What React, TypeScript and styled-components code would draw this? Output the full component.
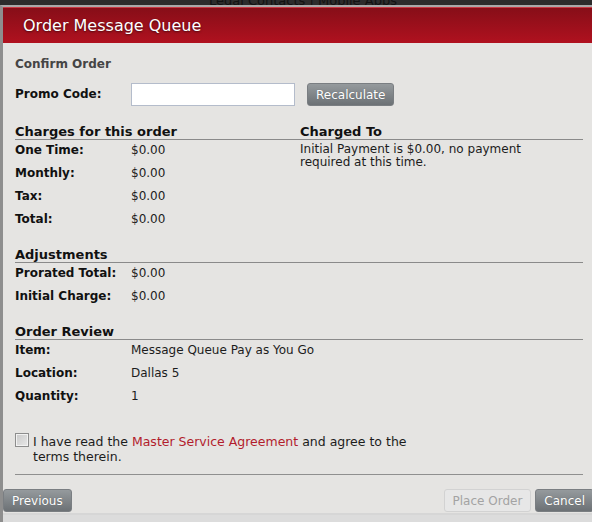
import React from "react";
import styled, { createGlobalStyle } from "styled-components";

const Global = createGlobalStyle`
  html, body { margin: 0; padding: 0; overflow: hidden; background: #2c2c2c; }
  body { font-family: "DejaVu Sans", Verdana, sans-serif; font-size: 12px; color: #111; }
`;

const Page = styled.div`
  width: 592px;
  height: 522px;
  overflow: hidden;
  display: flex;
  flex-direction: column;
`;

const TopStrip = styled.div`
  height: 5px;
  flex: none;
  overflow: hidden;
  background: #2c2c2c;
  padding-left: 209px;
`;

const TopLinks = styled.div`
  font-size: 13px;
  line-height: 13px;
  margin-top: -6px;
  color: #121212;
  white-space: nowrap;
`;

const Dialog = styled.div`
  box-sizing: border-box;
  width: 596px;
  flex: 1;
  display: flex;
  flex-direction: column;
  border-top: 2px solid #a9a9a9;
  border-left: 3px solid #8e8e8e;
  background: #e5e4e2;
`;

const Header = styled.div`
  height: 35px;
  flex: none;
  display: flex;
  align-items: center;
  padding-left: 20px;
  border-top: 1px solid #c83a44;
  background: linear-gradient(#870e18, #b0111f);
  color: #fff;
  font-size: 16px;
  text-shadow: 0 1px 2px rgba(0, 0, 0, 0.55);
`;

const Body = styled.div`
  padding: 13px 13px 0 12px;
  display: flex;
  flex-direction: column;
`;

const StepTitle = styled.div`
  font-weight: bold;
  font-size: 12px;
  line-height: 16px;
  color: #454545;
`;

const PromoRow = styled.div`
  display: flex;
  align-items: center;
  gap: 12px;
  margin-top: 11px;
  height: 23px;
`;

const Label = styled.div`
  width: 116px;
  flex: none;
  font-weight: bold;
`;

const PromoLabel = styled(Label)`
  width: 104px;
  margin-top: -2px;
`;

const TextInput = styled.input`
  box-sizing: border-box;
  width: 164px;
  height: 23px;
  border: 1px solid #b4bccb;
  background: #fff;
  margin: 0;
  padding: 0 4px;
  font: inherit;
`;

const Button = styled.button<{ $disabled?: boolean }>`
  box-sizing: border-box;
  height: 23px;
  margin: 0;
  padding: 0 8px;
  font-family: "DejaVu Sans", Verdana, sans-serif;
  font-size: 12px;
  border-radius: 3px;
  border: 1px solid ${(p) => (p.$disabled ? "#d2d2d2" : "#7a7e82")};
  background: ${(p) =>
    p.$disabled ? "#e7e7e7" : "linear-gradient(#959a9d, #6c7175)"};
  color: ${(p) => (p.$disabled ? "#a3a3a3" : "#fff")};
  text-shadow: ${(p) => (p.$disabled ? "none" : "0 0 1px rgba(0,0,0,0.3)")};
`;

const Columns = styled.div`
  display: flex;
  margin-top: 18px;
`;

const Column = styled.div<{ $w?: number }>`
  width: ${(p) => (p.$w ? `${p.$w}px` : "auto")};
  flex: ${(p) => (p.$w ? "none" : "1")};
  display: flex;
  flex-direction: column;
`;

const Section = styled.div<{ $gap?: number }>`
  display: flex;
  flex-direction: column;
  margin-top: ${(p) => p.$gap ?? 0}px;
`;

const SectionTitle = styled.div`
  font-size: 13px;
  font-weight: bold;
  line-height: 15px;
  border-bottom: 1px solid #8a8a8a;
  color: #111;
`;

const Row = styled.div`
  display: flex;
  height: 23px;
  line-height: 20px;
`;

const Value = styled.div`
  color: #1c1c1c;
`;

const Note = styled.div`
  padding-top: 3px;
  line-height: 13px;
  color: #1c1c1c;
`;

const Agreement = styled.div`
  display: flex;
  align-items: flex-start;
  margin-top: 24px;
  width: 410px;
  line-height: 15px;
  font-size: 12.5px;
  color: #1c1c1c;
`;

const CheckBox = styled.span`
  box-sizing: border-box;
  flex: none;
  width: 14px;
  height: 14px;
  margin-right: 4px;
  border: 1px solid #8d8d8d;
  background: linear-gradient(135deg, #c9c9c9, #e8e8e8);
  box-shadow: inset 0 0 0 1px #f2f2f2;
`;

const AgreeText = styled.div`
  margin-top: 1px;
`;

const Link = styled.a`
  color: #b21c2c;
  text-decoration: none;
`;

const Rule = styled.div`
  margin-top: 10px;
  border-top: 1px solid #8f8f8f;
`;

const ButtonBar = styled.div`
  display: flex;
  align-items: center;
  gap: 4px;
  margin-top: 14px;
  padding-right: 2px;
`;

const Spacer = styled.div`
  flex: 1;
`;

const Footer = styled.div`
  flex: 1;
  margin-top: 1px;
  border-top: 2px solid #d6d6d6;
  background: #dcdcdc;
`;

const charges = [
  ["One Time:", "$0.00"],
  ["Monthly:", "$0.00"],
  ["Tax:", "$0.00"],
  ["Total:", "$0.00"],
];

const adjustments = [
  ["Prorated Total:", "$0.00"],
  ["Initial Charge:", "$0.00"],
];

const review = [
  ["Item:", "Message Queue Pay as You Go"],
  ["Location:", "Dallas 5"],
  ["Quantity:", "1"],
];

const Rows = ({ items }: { items: string[][] }) => (
  <>
    {items.map(([l, v]) => (
      <Row key={l}>
        <Label>{l}</Label>
        <Value>{v}</Value>
      </Row>
    ))}
  </>
);

export default function App() {
  return (
    <Page>
      <Global />
      <TopStrip>
        <TopLinks>Legal Contacts | Mobile Apps</TopLinks>
      </TopStrip>
      <Dialog>
        <Header>Order Message Queue</Header>
        <Body>
          <StepTitle>Confirm Order</StepTitle>
          <PromoRow>
            <PromoLabel>Promo Code:</PromoLabel>
            <TextInput />
            <Button>Recalculate</Button>
          </PromoRow>
          <Columns>
            <Column $w={285}>
              <SectionTitle>Charges for this order</SectionTitle>
              <Rows items={charges} />
            </Column>
            <Column>
              <SectionTitle>Charged To</SectionTitle>
              <Note>
                Initial Payment is $0.00, no payment
                <br />
                required at this time.
              </Note>
            </Column>
          </Columns>
          <Section $gap={15}>
            <SectionTitle>Adjustments</SectionTitle>
            <Rows items={adjustments} />
          </Section>
          <Section $gap={15}>
            <SectionTitle>Order Review</SectionTitle>
            <Rows items={review} />
          </Section>
          <Agreement>
            <CheckBox />
            <AgreeText>
              I have read the <Link>Master Service Agreement</Link> and agree to
              the terms therein.
            </AgreeText>
          </Agreement>
          <Rule />
        </Body>
        <ButtonBar>
          <Button>Previous</Button>
          <Spacer />
          <Button $disabled>Place Order</Button>
          <Button>Cancel</Button>
        </ButtonBar>
        <Footer />
      </Dialog>
    </Page>
  );
}
